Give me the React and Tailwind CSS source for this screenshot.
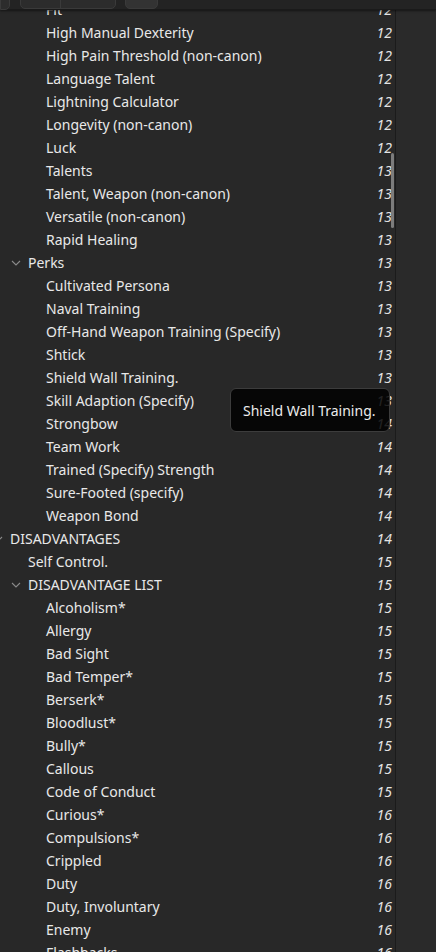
import React from "react";

// rows of the outline: [label, page, depth, expanded?]
const rows = [
  ["Fit", 12, 2],
  ["High Manual Dexterity", 12, 2],
  ["High Pain Threshold (non-canon)", 12, 2],
  ["Language Talent", 12, 2],
  ["Lightning Calculator", 12, 2],
  ["Longevity (non-canon)", 12, 2],
  ["Luck", 12, 2],
  ["Talents", 13, 2],
  ["Talent, Weapon (non-canon)", 13, 2],
  ["Versatile (non-canon)", 13, 2],
  ["Rapid Healing", 13, 2],
  ["Perks", 13, 1, true],
  ["Cultivated Persona", 13, 2],
  ["Naval Training", 13, 2],
  ["Off-Hand Weapon Training (Specify)", 13, 2],
  ["Shtick", 13, 2],
  ["Shield Wall Training.", 13, 2],
  ["Skill Adaption (Specify)", 13, 2],
  ["Strongbow", 14, 2],
  ["Team Work", 14, 2],
  ["Trained (Specify) Strength", 14, 2],
  ["Sure-Footed (specify)", 14, 2],
  ["Weapon Bond", 14, 2],
  ["DISADVANTAGES", 14, 0, true],
  ["Self Control.", 15, 1],
  ["DISADVANTAGE LIST", 15, 1, true],
  ["Alcoholism*", 15, 2],
  ["Allergy", 15, 2],
  ["Bad Sight", 15, 2],
  ["Bad Temper*", 15, 2],
  ["Berserk*", 15, 2],
  ["Bloodlust*", 15, 2],
  ["Bully*", 15, 2],
  ["Callous", 15, 2],
  ["Code of Conduct", 15, 2],
  ["Curious*", 16, 2],
  ["Compulsions*", 16, 2],
  ["Crippled", 16, 2],
  ["Duty", 16, 2],
  ["Duty, Involuntary", 16, 2],
  ["Enemy", 16, 2],
  ["Flashbacks", 16, 2],
];

const indent = ["pl-[10px]", "pl-[28px]", "pl-[46px]"];

const Chevron = () => (
  <svg
    width="10"
    height="6"
    viewBox="0 0 10 6"
    className="absolute -left-[17px] top-1/2 -translate-y-1/2"
  >
    <path d="M1 1 L5 5 L9 1" fill="none" stroke="#8a8a8a" strokeWidth="1.1" />
  </svg>
);

const Row = ({ label, page, depth, open }) => (
  <div className={`flex h-[23px] items-center leading-[23px] ${indent[depth]}`}>
    <div className="relative flex-1 whitespace-nowrap text-[#e8e8e8]">
      {open && <Chevron />}
      {label}
    </div>
    <span className="w-[30px] pr-[3px] text-right italic text-[#e4e4e4]">
      {page}
    </span>
  </div>
);

export default function App() {
  return (
    <div
      className="relative h-[952px] w-[436px] overflow-hidden bg-[#282828] text-[14px]"
      style={{ fontFamily: '"Noto Sans", "Open Sans", sans-serif' }}
    >
      <div className="relative z-10 flex h-[10px] items-end border-b border-[#1a1a1a] bg-[#232323] shadow-[0_1px_2px_rgba(0,0,0,0.5)]">
        <div className="h-[14px] w-[10px] -mb-[1px] rounded-br-[5px] border border-[#3a3a3a] bg-[#2c2c2c]" />
        <div className="ml-[10px] flex h-[14px] w-[96px] rounded-b-[5px] border border-[#3a3a3a] bg-[#2c2c2c]">
          <div className="w-[40px] border-r border-[#3a3a3a]" />
        </div>
        <div className="ml-[9px] h-[14px] w-[33px] rounded-b-[5px] border border-[#3a3a3a] bg-[#333]" />
      </div>

      <div className="flex h-[942px]">
        <div className="relative w-[395px] overflow-hidden">
          <div className="-mt-[12px]">
            {rows.map(([label, page, depth, open]) => (
              <Row key={label} label={label} page={page} depth={depth} open={open} />
            ))}
          </div>
          <div className="absolute left-[391px] top-[143px] h-[75px] w-[3px] rounded-full bg-[#7c7c7c]" />
        </div>
        <div className="w-[41px] border-l border-[#1b1b1b] bg-[#2a2a2a]" />
      </div>

      <div className="absolute left-[230px] top-[388px] flex h-[44px] w-[160px] items-center rounded-[6px] border border-[#3c3c3c] bg-black/85 pl-[12px] text-[#ececec]">
        Shield Wall Training.
      </div>
    </div>
  );
}
